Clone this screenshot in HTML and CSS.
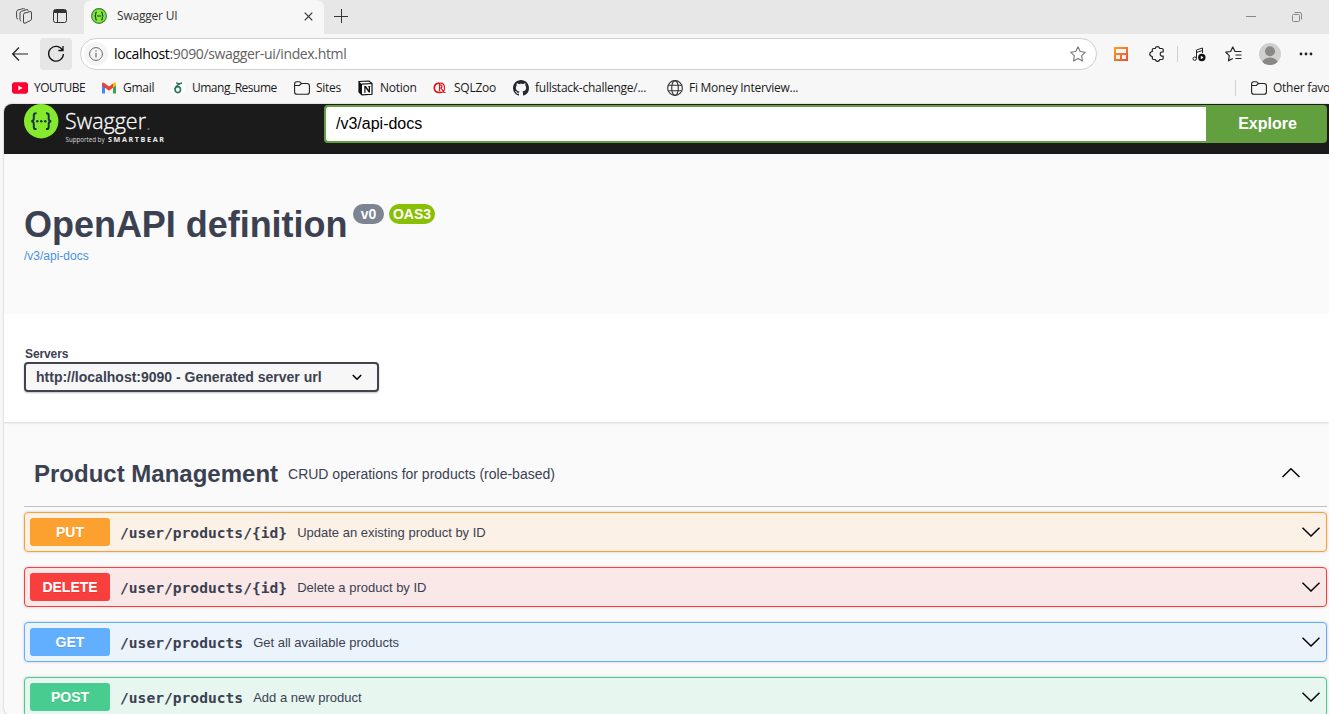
FILE: index.html
```html
<!DOCTYPE html>
<html lang="en">
<head>
<meta charset="utf-8">
<title>Swagger UI</title>
<link rel="stylesheet" href="styles.css">
</head>
<body>
<div class="tabs">
  <svg class="workspaces" width="16" height="16" viewBox="0 0 16 16" fill="none" stroke="#444"><path d="M8 5.3 14 3.6Q15.5 3.2 15.5 4.8V11Q15.5 12 14.4 12.5L9 15.2Q7.5 15.7 7.5 14V6.4Q7.5 5.6 8.3 5.2ZM5.2 13Q4 13 4 11.5V5Q4 3.9 5.2 3.4L11 1.6Q12.2 1.4 12.2 2.7M2 11Q.6 10.8.6 9.5V3.7Q.6 2.6 1.8 2.1L7.4.6Q8.8.3 9 1.4"/></svg>
  <svg class="tab-actions" width="14" height="14" viewBox="0 0 14 14" fill="none" stroke="#333"><rect x=".5" y=".5" width="13" height="13" rx="2"/><path d="M1 1.500h12M1 2.500h12M1 3.500h12"/><path d="M4.500 4v9"/></svg>
  <div class="tab">
    <svg width="16" height="16" viewBox="0 0 16 16"><circle cx="8" cy="8" r="7.4" fill="#85ea2d" stroke="#3c7d3e" stroke-width="1.1"/><path d="M6 4Q4.7 4 4.7 5.3V6.5Q4.7 8 3.5 8 4.7 8 4.7 9.5V10.7Q4.7 12 6 12M10 4Q11.3 4 11.3 5.3V6.5Q11.3 8 12.5 8 11.3 8 11.3 9.5V10.7Q11.3 12 10 12M6 8h4" fill="none" stroke="#173647" stroke-width="1.1"/></svg>
    <span class="tab-title">Swagger UI</span>
    <svg class="close" width="9" height="9" viewBox="0 0 9 9"><path d="M.7.7 8.3 8.3M8.3.7.7 8.3" stroke="#333" stroke-width="1.2"/></svg>
  </div>
  <svg class="new-tab" width="14" height="14" viewBox="0 0 14 14"><path d="M7.500 0v14M0 7.500h14" stroke="#333"/></svg>
  <div class="window-controls">
    <svg width="10" height="10" viewBox="0 0 10 10"><path d="M0 5.5h10" stroke="#888"/></svg>
    <svg class="restore" width="10" height="10" viewBox="0 0 10 10" fill="none" stroke="#888"><rect x=".5" y="2.500" width="7" height="7" rx="1"/><path d="M2.500.5H8Q9.500.5 9.500 2v5.500"/></svg>
  </div>
</div>

<div class="toolbar">
  <svg class="back" width="16" height="14" viewBox="0 0 16 14" fill="none" stroke="#222" stroke-width="1.2"><path d="M7 .5.7 7 7 13.5M1 7h15"/></svg>
  <div class="reload"><svg width="18" height="18" viewBox="0 0 18 18" fill="none" stroke="#111" stroke-width="1.3"><path d="M15.500 5.200A7.400 7.400 0 1 0 16.400 9M16 1v4.500h-4.600"/></svg></div>
  <div class="address">
    <div class="info"><svg width="14" height="14" viewBox="0 0 14 14" fill="none" stroke="#6b6b6b"><circle cx="7" cy="7" r="6.4"/><path d="M7 6v4.4M7 3.5v1.3" stroke-width="1.2"/></svg></div>
    <span class="url"><b>localhost</b>:9090/swagger-ui/index.html</span>
    <svg class="star" width="16" height="16" viewBox="0 0 16 16" fill="none" stroke="#777" stroke-width="1.1" stroke-linejoin="round"><path d="m8 .8 2.2 4.7 5.1.7-3.7 3.6.9 5.1L8 12.5l-4.5 2.4.9-5.1L.7 6.2l5.1-.7Z"/></svg>
  </div>
  <div class="tools">
    <svg width="14" height="14" viewBox="0 0 14 14"><defs><linearGradient id="o" x2="1" y2="1"><stop stop-color="#ffa01c"/><stop offset="1" stop-color="#ef4a37"/></linearGradient></defs><path d="M0 0h14v14H0ZM2 2v4h10V2ZM2 8v4h4V8ZM8 8v4h4V8Z" fill="url(#o)" fill-rule="evenodd"/></svg>
    <svg width="16" height="16" viewBox="0 0 16 16" fill="none" stroke="#222" stroke-width="1.2" stroke-linejoin="round"><path d="M5.500 2.500H6.200Q6.800.7 8.500.7T10.800 2.500H13Q14.200 2.500 14.200 3.700V5.800Q11.200 5.700 11.200 8T14.200 10.200V12.300Q14.200 13.500 13 13.500H10.800Q10.200 15.300 8.500 15.300T6.200 13.500H4.500Q3.300 13.500 3.300 12.300V10.500Q.8 10 .8 8T3.300 5.500V3.700Q3.300 2.500 4.500 2.500Z"/></svg>
    <i class="divider"></i>
    <svg width="16" height="16" viewBox="0 0 16 16" fill="none" stroke="#222"><path d="M5.500 12.500V4L11.500 2V7M5.500 6.500 11.500 4.500"/><circle cx="3.700" cy="12.700" r="1.700"/><circle cx="10.800" cy="11.500" r="3.700" fill="#111" stroke="none"/><path d="m9.800 9.700 2.800 1.800-2.800 1.800Z" fill="#fff" stroke="none"/></svg>
    <svg width="17" height="16" viewBox="0 0 17 16" fill="none" stroke="#222" stroke-width="1.200" stroke-linejoin="round"><path d="M12 5.500H10L7.800 1 5.600 5.500.8 6.200 4.300 9.600 3.500 14.800 7.800 12.500M10 5.500h6.500M10.500 9h6M10.500 12.500h6"/></svg>
    <svg width="22" height="22" viewBox="0 0 22 22"><defs><clipPath id="av"><circle cx="11" cy="11" r="11"/></clipPath></defs><g clip-path="url(#av)"><path fill="#d2d0ce" d="M0 0h22v22H0z"/><circle cx="11" cy="8.3" r="5" fill="#8a8886"/><ellipse cx="11" cy="20.5" rx="8" ry="6" fill="#8a8886"/></g></svg>
    <svg width="14" height="4" viewBox="0 0 14 4" fill="#222"><circle cx="2" cy="2" r="1.400"/><circle cx="7" cy="2" r="1.400"/><circle cx="12" cy="2" r="1.400"/></svg>
  </div>
</div>

<div class="bookmarks">
  <a><svg width="16" height="16" viewBox="0 0 16 16"><rect y="2.3" width="16" height="11.5" rx="2.8" fill="#f03"/><path d="m6.3 5.5 4.3 2.5-4.3 2.5Z" fill="#fff"/></svg><span class="tight">YOUTUBE</span></a>
  <a><svg width="16" height="16" viewBox="0 0 16 16"><path d="M1 13.500V4l3 2v7.500Z" fill="#4285f4"/><path d="M12 13.500V6l3-2v9.500Z" fill="#34a853"/><path d="M12 7.800V3.500Q15 1.500 15 4v1.500Z" fill="#fbbc04"/><path d="M1 5.500V4Q1 1.500 4 3.500L8 6.500 12 3.500V7.800L8 10.800 4 7.800Z" fill="#ea4335"/></svg><span>Gmail</span></a>
  <a><svg width="16" height="16" viewBox="0 0 16 16"><circle cx="8" cy="8" r="7.800" fill="#fff"/><ellipse cx="7.800" cy="9.600" rx="2.700" ry="3" fill="none" stroke="#287850" stroke-width="1.600"/><path d="M5 9Q5.500 5.300 12 2.800M6.300 2.600Q8.500 4.500 11.800 3" fill="none" stroke="#287850" stroke-width="1.400"/></svg><span class="tight">Umang_Resume</span></a>
  <a><svg width="16" height="16" viewBox="0 0 16 16" fill="none" stroke="#222" stroke-width="1.100"><path d="M.6 4Q.6 1.700 2.800 1.700H5.500L7.500 3.500H13Q15.400 3.500 15.400 5.800V12Q15.400 14.300 13 14.300H3Q.6 14.300.6 12ZM.8 5.500H5.300L7.500 3.500"/></svg><span>Sites</span></a>
  <a><svg width="16" height="16" viewBox="0 0 16 16"><path d="M1 1.500 11 1 14 3.500V14.300L4 14.800 1 12Z" fill="#fff" stroke="#111" stroke-width="1.200"/><path d="M1 1.500 4 4.200V14.800L1 12Z" fill="#111"/><path d="M4 4.200 14 3.500" stroke="#111" stroke-width="1.200"/><path d="M6 6h2l2.700 4V6.800L9.800 6h3l-.8.8V12.500H10.700L7.500 8V11.700l.9.800H5.500l.8-.8V6.700Z" fill="#111"/></svg><span>Notion</span></a>
  <a><svg width="16" height="16" viewBox="0 0 16 16" fill="none" stroke="#e5141b"><path d="M0 0h16v16H0z" fill="#fff" stroke="none"/><path d="M6.500 3.200Q2.300 4 2.300 8T6.500 12.300H9" stroke-width="1.700"/><path d="M6 3.200H8.500Q12.500 3.200 12.500 8T9 12.300M7.500 3.500V11M7.500 5.200H8.800Q10 5.200 10 6.500T8.800 8H7.500M9 8l3 4.500h1.500" stroke-width="1.200"/></svg><span>SQLZoo</span></a>
  <a><svg width="16" height="16" viewBox="0 0 16 16"><path fill="#24292f" d="M8 0C3.580 0 0 3.580 0 8c0 3.540 2.290 6.530 5.470 7.590.4.070.55-.17.55-.38 0-.19-.01-.82-.01-1.490-2.010.37-2.530-.49-2.690-.94-.09-.23-.48-.94-.82-1.130-.28-.15-.68-.52-.01-.53.630-.01 1.080.58 1.230.82.720 1.210 1.870.87 2.330.66.070-.52.28-.87.51-1.070-1.780-.2-3.640-.89-3.640-3.950 0-.87.31-1.590.82-2.150-.08-.2-.36-1.020.08-2.120 0 0 .67-.21 2.200.82.64-.18 1.320-.27 2-.27s1.360.09 2 .27c1.530-1.040 2.200-.82 2.200-.82.44 1.100.16 1.920.08 2.120.51.56.82 1.270.82 2.150 0 3.070-1.870 3.750-3.650 3.950.29.25.54.73.54 1.480 0 1.070-.01 1.930-.01 2.200 0 .21.15.46.55.38A8.010 8.010 0 0 0 16 8c0-4.420-3.580-8-8-8Z"/></svg><span>fullstack-challenge/...</span></a>
  <a><svg width="16" height="16" viewBox="0 0 16 16" fill="none" stroke="#333" stroke-width="1.100"><circle cx="8" cy="8" r="7.400"/><ellipse cx="8" cy="8" rx="3.300" ry="7.400"/><path d="M1.300 5.300h13.400M1.300 10.700h13.400"/></svg><span>Fi Money Interview...</span></a>
  <a class="other"><svg width="16" height="16" viewBox="0 0 16 16" fill="none" stroke="#222" stroke-width="1.100"><path d="M.6 4Q.6 1.700 2.800 1.700H5.500L7.500 3.500H13Q15.400 3.500 15.400 5.800V12Q15.400 14.300 13 14.300H3Q.6 14.300.6 12ZM.8 5.500H5.300L7.500 3.500"/></svg><span>Other favo</span></a>
</div>

<main class="page">
  <header class="topbar">
    <svg class="logo" width="146" height="44" viewBox="0 0 146 44">
      <circle cx="17.200" cy="17.200" r="17.200" fill="#85ea2d"/>
      <path d="M12.500 9.300H12Q9.800 9.300 9.800 11.500V14.500Q9.800 17.200 7.200 17.200 9.800 17.200 9.800 19.900V22.900Q9.800 25.100 12 25.100H12.500M22 9.300H22.500Q24.700 9.300 24.700 11.500V14.500Q24.700 17.200 27.300 17.200 24.700 17.200 24.700 19.900V22.900Q24.700 25.100 22.500 25.100H22" fill="none" stroke="#173647" stroke-width="2"/>
      <g fill="#173647"><circle cx="13.300" cy="17.200" r="1.200"/><circle cx="17.300" cy="17.200" r="1.200"/><circle cx="21.300" cy="17.200" r="1.200"/></g>
      <text class="logo-name" x="41" y="24.500" textLength="81" lengthAdjust="spacingAndGlyphs">Swagger</text>
      <path d="M123.500 25h2" stroke="#aaa"/>
      <text class="logo-by" x="41.500" y="38" textLength="39" lengthAdjust="spacingAndGlyphs">Supported by</text>
      <text class="logo-brand" x="84" y="38" textLength="56">SMARTBEAR</text>
    </svg>
    <div class="spec-input">/v3/api-docs</div>
    <div class="explore">Explore</div>
  </header>
  <section class="info-block">
    <h1>OpenAPI definition</h1>
    <div class="badges"><span class="badge">v0</span><span class="badge oas">OAS3</span></div>
    <a class="spec-link">/v3/api-docs</a>
  </section>
  <section class="servers">
    <label>Servers</label>
    <div class="select"><span>http://localhost:9090 - Generated server url</span><svg width="10" height="7" viewBox="0 0 10 7"><path d="m.8 1 4.200 4.200L9.200 1" fill="none" stroke="#000" stroke-width="1.600"/></svg></div>
  </section>
  <section class="operations">
    <div class="tag"><h2>Product Management</h2><p>CRUD operations for products (role-based)</p><svg width="18" height="10" viewBox="0 0 18 10"><path d="M.5 9 9 .8 17.500 9" fill="none" stroke="#000" stroke-width="1.500"/></svg></div>
    <div class="op put"><b class="method">PUT</b><code>/user/products/{id}</code><span>Update an existing product by ID</span><svg width="18" height="10" viewBox="0 0 18 10"><path d="M.5.8 9 9 17.500.8" fill="none" stroke="#000" stroke-width="1.500"/></svg></div>
    <div class="op delete"><b class="method">DELETE</b><code>/user/products/{id}</code><span>Delete a product by ID</span><svg width="18" height="10" viewBox="0 0 18 10"><path d="M.5.8 9 9 17.500.8" fill="none" stroke="#000" stroke-width="1.500"/></svg></div>
    <div class="op get"><b class="method">GET</b><code>/user/products</code><span>Get all available products</span><svg width="18" height="10" viewBox="0 0 18 10"><path d="M.5.8 9 9 17.500.8" fill="none" stroke="#000" stroke-width="1.500"/></svg></div>
    <div class="op post"><b class="method">POST</b><code>/user/products</code><span>Add a new product</span><svg width="18" height="10" viewBox="0 0 18 10"><path d="M.5.8 9 9 17.500.8" fill="none" stroke="#000" stroke-width="1.500"/></svg></div>
  </section>
</main>
</body>
</html>
```
FILE: styles.css
```css
* { box-sizing: border-box; }
html, body { margin: 0; height: 714px; overflow: hidden; }
body { background: #f7f7f7; color: #3b4151; font-family: "Liberation Sans", Arial, sans-serif; display: flex; flex-direction: column; }
svg { display: block; flex: none; }
h1, h2, p { margin: 0; }

.tabs { height: 34px; flex: none; display: flex; align-items: center; background: #e7e7e7; font-family: "Open Sans", sans-serif; }
.workspaces { margin: -2px 0 0 16px; }
.tab-actions { margin: -2px 0 0 21px; }
.tab { width: 240px; height: 34px; margin-left: 17px; padding: 0 11px 2px 7px; display: flex; align-items: center; background: #f7f7f7; border-radius: 8px 8px 0 0; }
.tab-title { margin: -1px 0 0 10px; font-size: 12px; color: #333; letter-spacing: -.2px; }
.close { margin-left: auto; }
.new-tab { margin: -3px 0 0 10px; }
.window-controls { display: flex; gap: 36px; margin: -2px 27px 0 auto; }
.restore { margin-top: 1px; }

.toolbar { height: 40px; flex: none; display: flex; align-items: center; font-family: "Open Sans", sans-serif; }
.back { margin-left: 12px; }
.reload { width: 32px; height: 32px; margin-left: 12px; display: grid; place-items: center; background: #e6e6e6; border-radius: 4px; }
.address { width: 1017px; height: 32px; margin-left: 8px; padding: 0 10px 0 3px; display: flex; align-items: center; background: #fff; border: 1px solid #cfcfcf; border-radius: 16px; }
.info { width: 24px; height: 24px; display: grid; place-items: center; background: #f5f5f5; border-radius: 50%; }
.url { margin: -1px 0 0 6px; font-size: 14px; color: #616161; letter-spacing: -.35px; }
.url b { font-weight: 400; color: #000; }
.star { margin-left: auto; }
.tools { margin-left: 6px; display: grid; grid-template-columns: 36px 36px 5px 37px 33px 39px 33px; align-items: center; justify-items: center; }
.divider { width: 1px; height: 16px; background: #d0d0d0; }

.bookmarks { height: 30px; flex: none; padding: 0 0 2px 12px; display: grid; grid-template-columns: 89px 69px 124px 64px 74px 81px 154px 568px 110px; align-items: center; font: 12px "Open Sans", sans-serif; letter-spacing: -.26px; color: #1a1a1a; overflow: hidden; }
.bookmarks a { display: flex; align-items: center; gap: 6px; white-space: nowrap; }
.bookmarks span { margin-top: -1px; }
.tight { letter-spacing: -.5px; }
.other { height: 16px; padding-left: 15px; border-left: 1px solid #d0d0d0; }

.page { flex: none; width: 1325px; height: 612px; margin-left: 4px; background: #fafafa; border-radius: 8px 0 0 8px; overflow: hidden; box-shadow: 0 0 2px rgba(0,0,0,.3); }
.topbar { height: 50px; display: flex; padding-left: 20px; background: #1b1b1b; }
.logo-name { font: 300 22.500px "Open Sans", sans-serif; fill: #fff; stroke: #fff; stroke-width: .3px; }
.logo-by { font: 6.500px "Open Sans", sans-serif; fill: #ddd; }
.logo-brand { font: 700 7.200px "Open Sans", sans-serif; fill: #eee; }
.spec-input { width: 882px; height: 38px; margin: 1px 0 0 154px; padding-left: 10px; border: 2px solid #62a03f; border-right: 0; border-radius: 4px 0 0 4px; background: #fff; color: #000; font-size: 16px; line-height: 33px; }
.explore { width: 121px; height: 38px; margin-top: 1px; padding-left: 2px; background: #62a03f; border-radius: 0 4px 4px 0; color: #fff; font-size: 16px; font-weight: 700; line-height: 37px; text-align: center; }

.info-block { height: 160px; padding: 50px 20px 0; display: grid; grid-template: 42px 18px / 324px 1fr; align-content: start; column-gap: 5px; }
h1 { font-size: 36px; line-height: 41px; white-space: nowrap; letter-spacing: -.03px; }
.badges { display: flex; gap: 5px; }
.badge { width: 31px; height: 20px; border-radius: 10px; background: #7d8492; color: #fff; font-size: 14px; font-weight: 700; line-height: 20px; text-align: center; }
.badge.oas { width: 46px; background: #89bf04; }
.spec-link { margin-top: 1px; font-size: 12px; line-height: 18px; color: #4990e2; }

.servers { height: 108px; padding: 32px 20px 0; background: #fff; box-shadow: 0 1px 2px rgba(0,0,0,.15); }
.servers label { display: block; height: 16px; padding-left: 1px; font-size: 12px; font-weight: 700; line-height: 17px; letter-spacing: -.1px; }
.select { width: 355px; height: 30px; padding: 0 15px 0 10px; display: flex; align-items: center; justify-content: space-between; border: 2px solid #41444e; border-radius: 4px; background: #f7f7f7; box-shadow: 0 1px 2px rgba(0,0,0,.25); font-size: 14px; font-weight: 700; }

.operations { padding: 20px 2px 0 20px; }
.tag { height: 65px; padding: 0 27px 0 10px; display: flex; align-items: center; border-bottom: 1px solid #c0c1c4; margin-bottom: 5px; }
.tag h2 { font-size: 24px; }
.tag p { margin-left: 10px; font-size: 14px; }
.tag svg { margin: -2px 0 0 auto; }
.op { height: 40px; margin-bottom: 15px; padding: 0 6px 0 5px; display: flex; align-items: center; border: 1px solid; border-radius: 4px; box-shadow: 0 0 3px rgba(0,0,0,.19); font-size: 13px; }
.op code { margin-left: 10px; font: 700 14.620px "DejaVu Sans Mono", monospace; }
.op span { margin-left: 10px; color: #3b4151; }
.op svg { margin-left: auto; }
.method { width: 80px; height: 28px; border-radius: 3px; color: #fff; font-size: 14px; line-height: 28px; text-align: center; text-shadow: 0 1px 0 rgba(0,0,0,.1); }
.put { background: #fbf1e6; border-color: #fca130; }
.put .method { background: #fca130; }
.delete { background: #fae7e7; border-color: #f93e3e; }
.delete .method { background: #f93e3e; }
.get { background: #ebf3fb; border-color: #61affe; }
.get .method { background: #61affe; }
.post { background: #e8f6f0; border-color: #49cc90; }
.post .method { background: #49cc90; }
```
